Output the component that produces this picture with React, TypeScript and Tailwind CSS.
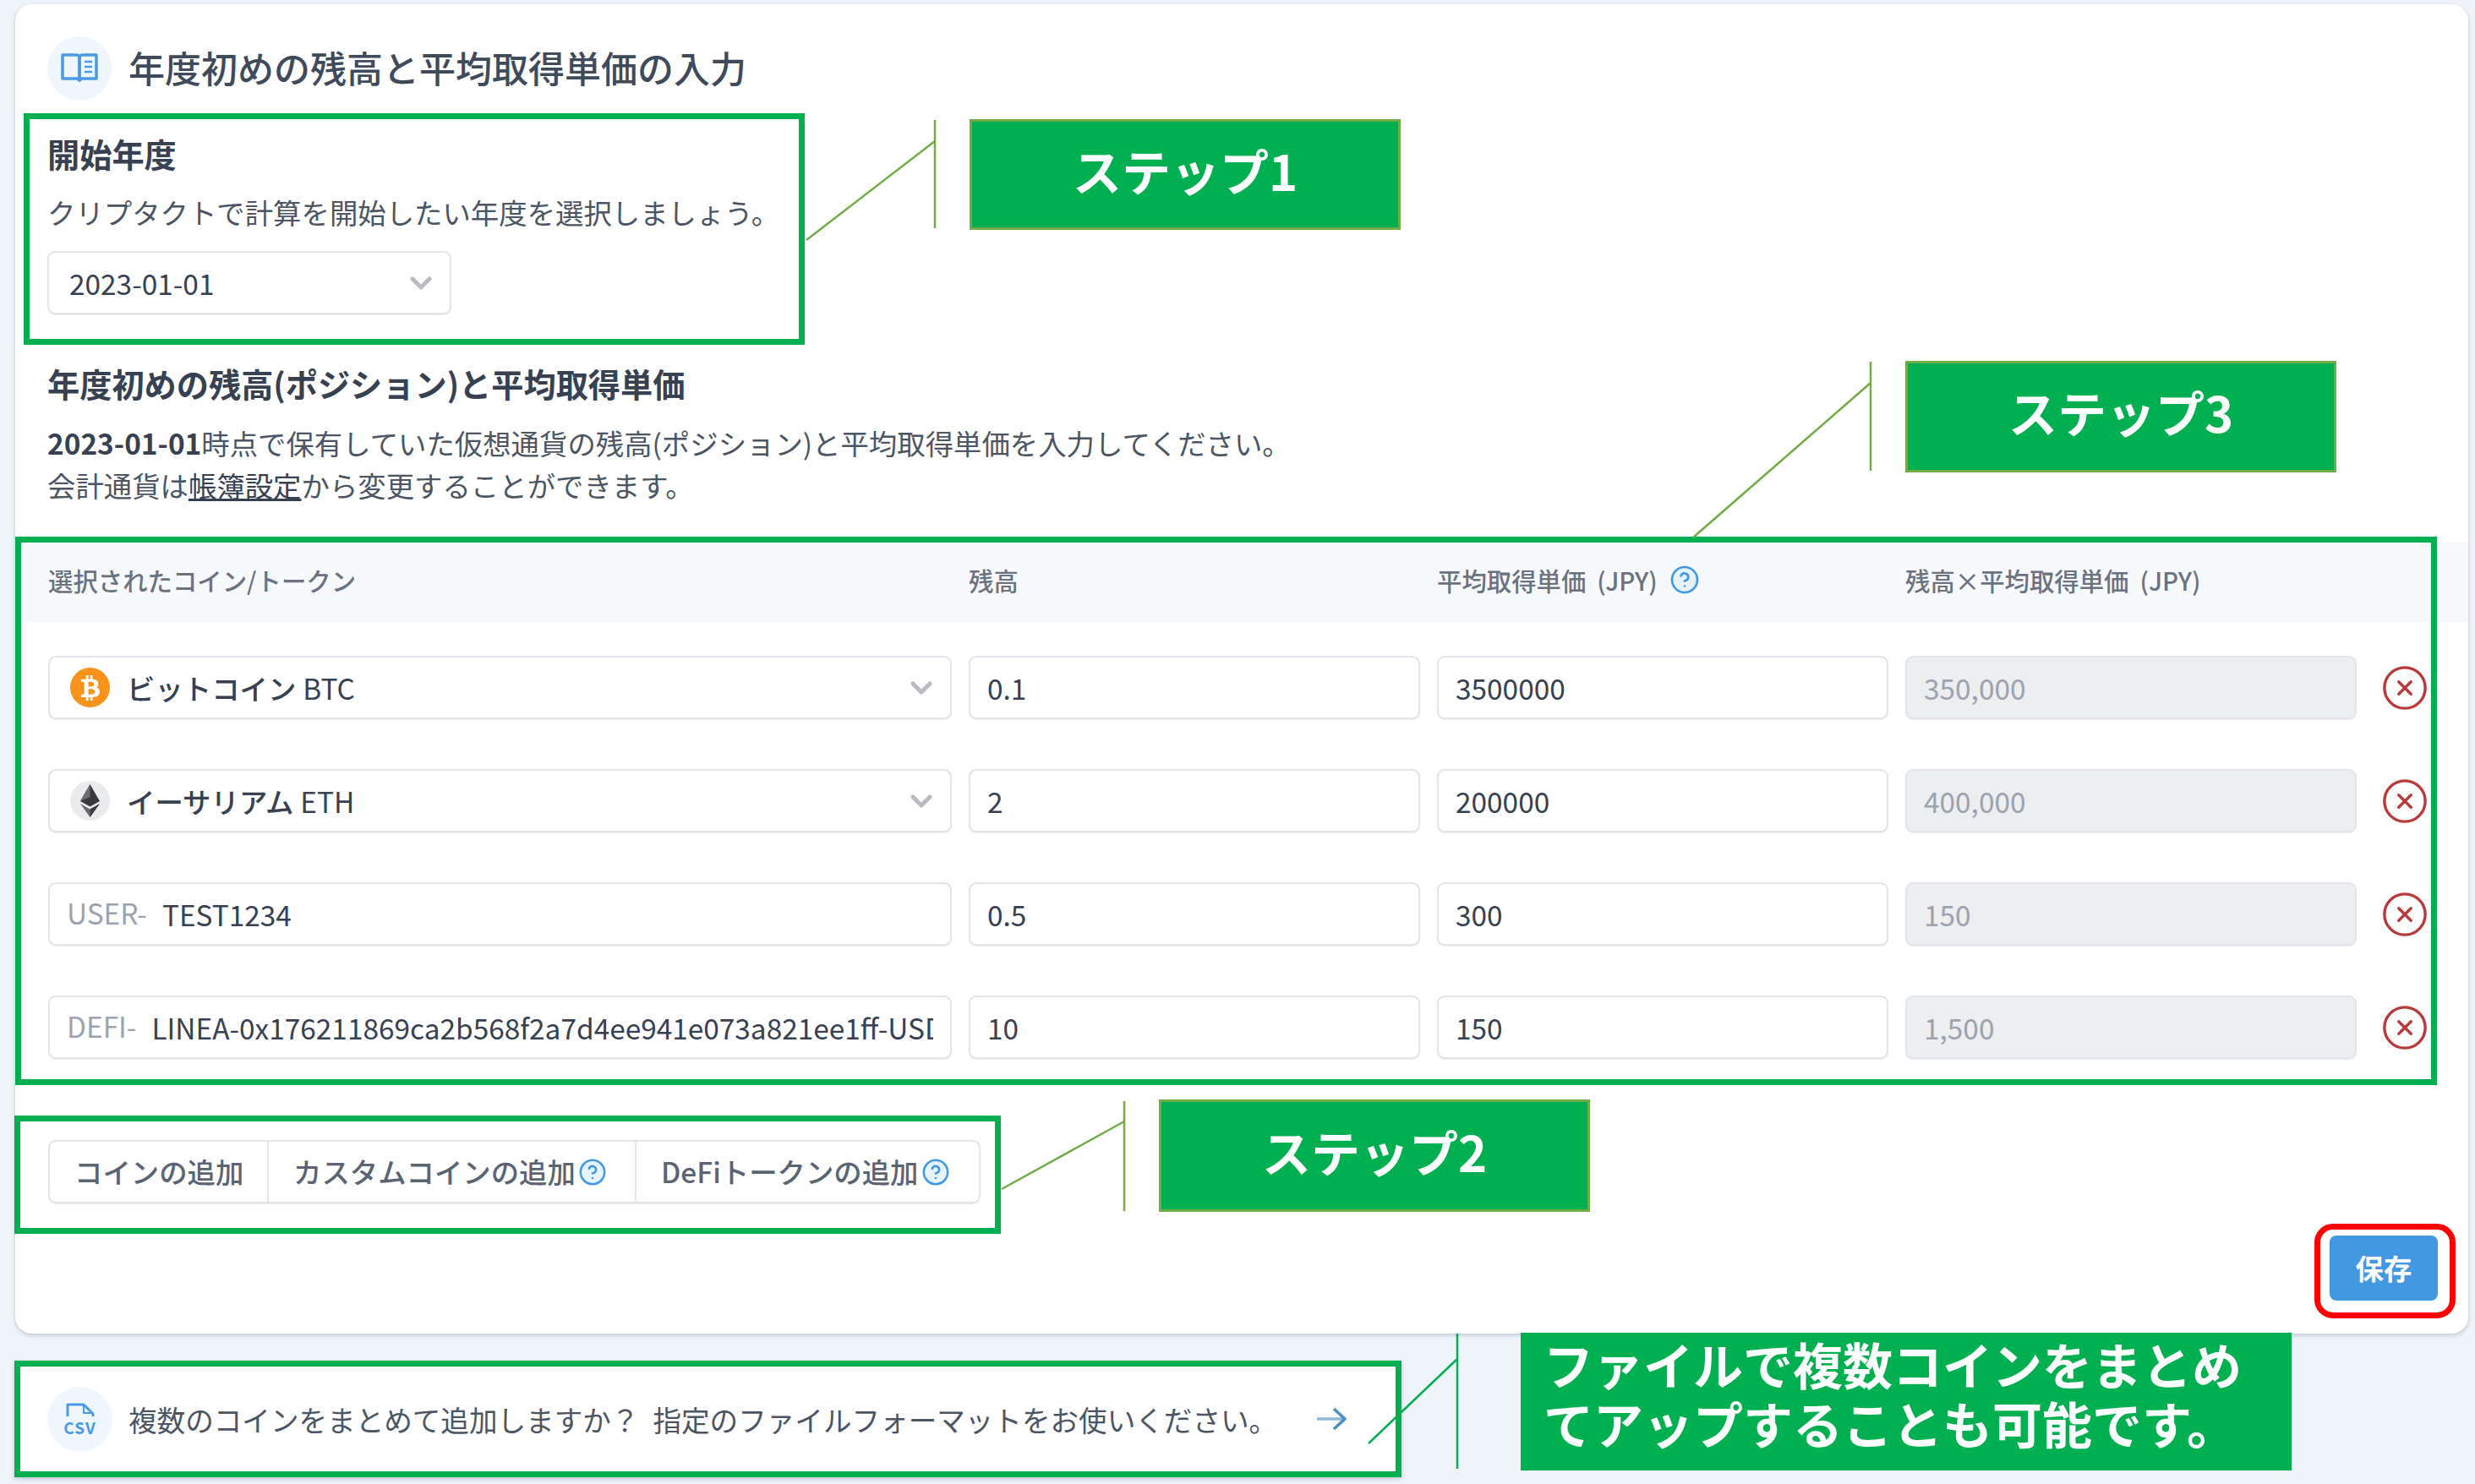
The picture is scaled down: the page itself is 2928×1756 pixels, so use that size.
import { ChevronDown, CircleHelp, CircleX } from 'lucide-react';
import { FaBtc } from 'react-icons/fa';

const rows = [
  { id: 'btc', balance: '0.1', price: '3500000', total: '350,000' },
  { id: 'eth', balance: '2', price: '200000', total: '400,000' },
  { id: 'user', balance: '0.5', price: '300', total: '150' },
  { id: 'defi', balance: '10', price: '150', total: '1,500' },
];

const fieldClass =
  'h-[75px] rounded-[9px] border-2 border-[#e2e5e9] shadow-[0_1px_1px_rgba(0,0,0,0.08)] flex items-center text-[33.4px] leading-[50px] whitespace-nowrap overflow-hidden';

function HelpIcon({ className }: { className: string }) {
  return <CircleHelp className={className} color="#4299e1" fill="#e6f2fc" strokeWidth={1.8} />;
}

function BookIcon() {
  return (
    <svg viewBox="0 0 44 36" className="w-[44px] h-[36px]" fill="none" stroke="#4a9ae4" strokeWidth="3.5" strokeLinejoin="round">
      <path d="M2 2h16c2 0 4 1 4 3v27l-3-2H2z" />
      <path d="M42 2H26c-2 0-4 1-4 3v27l3-2h17z" />
      <path d="M28 10h9M28 16h9M28 22h9" strokeWidth="2.5" />
    </svg>
  );
}

function EthIcon() {
  return (
    <svg viewBox="0 0 47 47" className="w-[47px] h-[47px]">
      <circle cx="23.5" cy="23.5" r="23.5" fill="#e9ebec" />
      <path d="M23.5 4 12 24l11.5 6.5L35 24z" fill="#3a3a3c" />
      <path d="M23.5 4 12 24l11.5-5z" fill="#6e6e70" />
      <path d="M12 27l11.5 16L35 27l-11.5 6.5z" fill="#6b6b6d" />
      <path d="M23.5 33.5V43L35 27z" fill="#3f3f41" />
    </svg>
  );
}

function CoinCell({ id }: { id: string }) {
  if (id === 'btc' || id === 'eth') {
    return (
      <div className={`${fieldClass} bg-white text-[#374151] pl-[24px] pr-[14px]`}>
        {id === 'btc' ? (
          <span className="w-[47px] h-[47px] rounded-full bg-[#f7931a] flex items-center justify-center">
            <FaBtc className="w-[30px] h-[30px] text-white" />
          </span>
        ) : (
          <EthIcon />
        )}
        <span className="ml-[20px] font-medium">{id === 'btc' ? 'ビットコイン' : 'イーサリアム'}</span>
        <span className="ml-[8px]">{id === 'btc' ? 'BTC' : 'ETH'}</span>
        <ChevronDown className="ml-auto w-[40px] h-[40px] text-[#b8bcc2]" strokeWidth={3} />
      </div>
    );
  }
  return (
    <div className={`${fieldClass} bg-white text-[#374151] pl-[20px] pr-[20px]`}>
      <span className="text-[#9ca3af] -mt-[4px] mr-[18px]">{id === 'user' ? 'USER-' : 'DEFI-'}</span>
      <span className="min-w-0 overflow-hidden">{id === 'user' ? 'TEST1234' : 'LINEA-0x176211869ca2b568f2a7d4ee941e073a821ee1ff-USDC'}</span>
    </div>
  );
}

export default function App() {
  return (
    <div
      className="relative w-[2928px] h-[1756px] bg-[#eff3fa] overflow-hidden pt-[5px]"
      style={{ fontFamily: '"Noto Sans CJK JP", "Noto Sans", sans-serif' }}
    >
      {/* main card */}
      <div className="ml-[18px] w-[2902px] h-[1573px] bg-white rounded-[20px] shadow-[0_2px_5px_rgba(60,70,90,0.25)] overflow-hidden pt-[38px]">
        <div className="flex items-center gap-[20px] pl-[38px]">
          <div className="w-[76px] h-[76px] rounded-full bg-[#eff6fd] flex items-center justify-center">
            <BookIcon />
          </div>
          <h1 className="-mt-[4px] text-[43px] leading-[60px] font-medium text-[#3f4a5a]">年度初めの残高と平均取得単価の入力</h1>
        </div>

        <div className="pl-[38px]">
          <h2 className="mt-[34px] text-[38.2px] leading-[58px] font-bold text-[#374151]">開始年度</h2>
          <p className="mt-[15px] text-[33.4px] leading-[50px] text-[#4b5563]">クリプタクトで計算を開始したい年度を選択しましょう。</p>
          <div className={`${fieldClass} mt-[21px] w-[478px] bg-white text-[#374151] pl-[24px] pr-[14px]`}>
            <span>2023-01-01</span>
            <ChevronDown className="ml-auto w-[40px] h-[40px] text-[#b8bcc2]" strokeWidth={3} />
          </div>
          <h2 className="mt-[53px] text-[38.2px] leading-[58px] font-bold text-[#374151]">年度初めの残高(ポジション)と平均取得単価</h2>
          <p className="mt-[16px] text-[33.4px] leading-[50px] text-[#4b5563]">
            <span className="font-bold text-[#374151]">2023-01-01</span>時点で保有していた仮想通貨の残高(ポジション)と平均取得単価を入力してください。
          </p>
          <p className="text-[33.4px] leading-[50px] text-[#4b5563]">
            会計通貨は<span className="underline text-[#374151]">帳簿設定</span>から変更することができます。
          </p>
        </div>

        {/* table */}
        <div className="mt-[42px] h-[95px] bg-[#f8f9fc] pl-[39px] pb-[4px] grid grid-cols-[1069px_534px_534px_534px] gap-x-[20px] items-center text-[29.4px] font-medium text-[#6b7280]">
          <div>選択されたコイン/トークン</div>
          <div>残高</div>
          <div className="flex items-center">
            平均取得単価<span className="ml-[13px]">(JPY)</span>
            <HelpIcon className="ml-[14px] w-[36px] h-[36px]" />
          </div>
          <div>残高×平均取得単価<span className="ml-[13px]">(JPY)</span></div>
        </div>

        <div className="mt-[40px] pl-[39px] flex flex-col gap-y-[59px]">
          {rows.map((row) => (
            <div key={row.id} className="grid grid-cols-[1069px_534px_534px_534px_74px] gap-x-[20px] items-center">
              <CoinCell id={row.id} />
              <div className={`${fieldClass} bg-white text-[#374151] pl-[20px]`}>{row.balance}</div>
              <div className={`${fieldClass} bg-white text-[#374151] pl-[20px]`}>{row.price}</div>
              <div className={`${fieldClass} bg-[#eceef0] text-[#9ca3af] pl-[20px]`}>{row.total}</div>
              <CircleX className="justify-self-center w-[58px] h-[58px] text-[#b83a3a]" strokeWidth={1.4} />
            </div>
          ))}
        </div>

        <div className="mt-[96px] ml-[39px] w-[1103px] h-[75px] rounded-[9px] border-2 border-[#e2e5e9] shadow-[0_1px_1px_rgba(0,0,0,0.08)] flex items-center text-[33.4px] font-medium text-[#5b6472] whitespace-nowrap">
          <div className="w-[259px] h-full flex items-center pl-[29px] border-r-2 border-[#e2e5e9]">コインの追加</div>
          <div className="w-[435px] h-full flex items-center pl-[29px] border-r-2 border-[#e2e5e9]">
            カスタムコインの追加
            <HelpIcon className="ml-[3px] w-[34px] h-[34px]" />
          </div>
          <div className="flex-1 h-full flex items-center pl-[29px]">
            DeFiトークンの追加
            <HelpIcon className="ml-[3px] w-[34px] h-[34px]" />
          </div>
        </div>

        <div className="mt-[38px] pr-[36px] flex justify-end">
          <button className="w-[128px] h-[77px] rounded-[8px] bg-[#4299e1] text-white text-[33.4px] font-bold">保存</button>
        </div>
      </div>

      {/* csv banner */}
      <div className="mt-[32px] ml-[17px] w-[1641px] h-[138px] bg-white border-[7px] border-[#00b050] shadow-[0_2px_5px_rgba(60,70,90,0.25)] flex items-center pl-[32px] pr-[58px]">
        <div className="w-[77px] h-[77px] rounded-full bg-[#eff6fd] flex flex-col items-center justify-center">
          <svg viewBox="0 0 34 17" className="w-[34px] h-[17px]" fill="none" stroke="#4a9ae4" strokeWidth="3" strokeLinejoin="round">
            <path d="M2 16V2h19l11 11v3" />
            <path d="M21 3v9h10" strokeWidth="2" />
          </svg>
          <span className="text-[19px] leading-[18px] mt-[3px] font-bold tracking-[1px] text-[#4a9ae4]">CSV</span>
        </div>
        <span className="ml-[19px] mt-[2px] text-[33.6px] leading-[50px] text-[#4b5563] whitespace-nowrap">
          複数のコインをまとめて追加しますか？<span className="ml-[16px]">指定のファイルフォーマットをお使いください。</span>
        </span>
        <svg viewBox="0 0 36 28" className="ml-auto w-[36px] h-[28px]" fill="none" stroke="#4a90c4" strokeWidth="3.5">
          <path d="M1 14h32" stroke="#8db9d9" />
          <path d="M21 2l13 12-13 12" />
        </svg>
      </div>

      {/* annotation frames */}
      <div className="absolute left-[28px] top-[134px] w-[924px] h-[274px] border-[7px] border-[#00b050]" />
      <div className="absolute left-[18px] top-[635px] w-[2865px] h-[649px] border-[7px] border-[#00b050]" />
      <div className="absolute left-[17px] top-[1320px] w-[1167px] h-[140px] border-[7px] border-[#00b050]" />
      <div className="absolute left-[2738px] top-[1448px] w-[167px] h-[112px] border-[7px] border-[#ff0000] rounded-[22px]" />

      {/* connector lines */}
      <svg className="absolute left-0 top-0 w-[2928px] h-[1756px]" viewBox="0 0 2928 1756" fill="none" strokeWidth="2.5">
        <g stroke="#70ad47">
          <path d="M954 284 1106 167M1106 142V270" />
          <path d="M2003 636 2213 453M2213 428V557" />
          <path d="M1185 1407 1330 1327M1330 1303V1433" />
        </g>
        <path d="M1619 1708 1724 1608M1724 1578V1738" stroke="#00b050" />
      </svg>

      {/* step callouts */}
      <div className="absolute left-[1147px] top-[141px] w-[510px] h-[131px] pb-[11px] bg-[#00b050] border-[3px] border-[#70ad47] flex items-center justify-center text-white text-[58px] font-bold">ステップ1</div>
      <div className="absolute left-[2254px] top-[427px] w-[510px] h-[132px] pb-[11px] bg-[#00b050] border-[3px] border-[#70ad47] flex items-center justify-center text-white text-[58px] font-bold">ステップ3</div>
      <div className="absolute left-[1371px] top-[1301px] w-[510px] h-[133px] pb-[11px] bg-[#00b050] border-[3px] border-[#70ad47] flex items-center justify-center text-white text-[58px] font-bold">ステップ2</div>
      <div className="absolute left-[1799px] top-[1577px] w-[912px] h-[163px] pb-[20px] bg-[#00b050] pl-[27px] flex flex-col justify-center text-white text-[59px] leading-[70px] font-bold whitespace-nowrap">
        <div>ファイルで複数コインをまとめ</div>
        <div>てアップすることも可能です。</div>
      </div>
    </div>
  );
}
